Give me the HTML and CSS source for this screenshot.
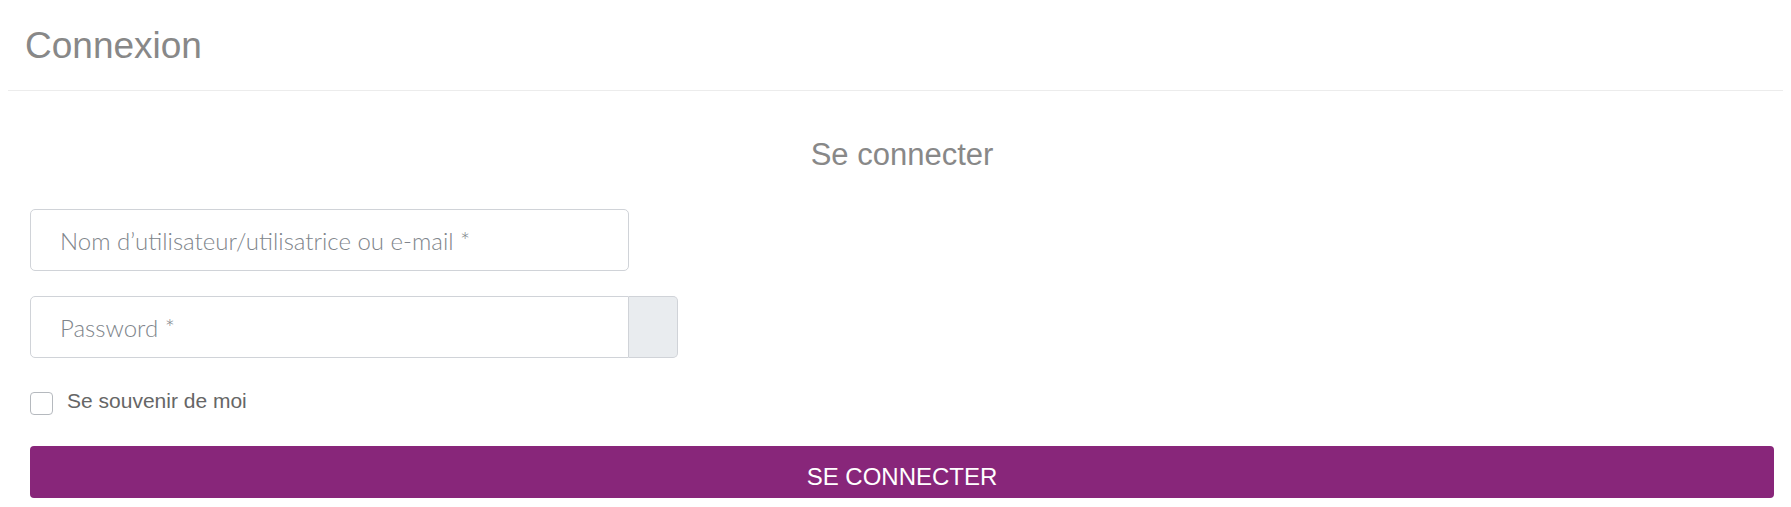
FILE: index.html
```html
<!DOCTYPE html>
<html lang="fr">
<head>
    <meta charset="UTF-8" />
    <meta name="viewport" content="width=device-width, initial-scale=1" />
    <title>Connexion</title>
    <link rel="stylesheet" href="styles.css">
</head>
<body>
    <div class="page-header">
        <h1>Connexion</h1>
    </div>

    <div class="login">
        <h2>Se connecter</h2>
        <form>
            <div class="field">
                <input type="text" placeholder="Nom d’utilisateur/utilisatrice ou e-mail *">
            </div>
            <div class="field group">
                <input type="password" placeholder="Password *">
                <span class="addon"></span>
            </div>
            <label class="remember">
                <span class="box"></span>
                <span class="remember-text">Se souvenir de moi</span>
            </label>
            <button type="button" class="submit">SE CONNECTER</button>
        </form>
    </div>
</body>
</html>
```

FILE: styles.css
```css
body {
    margin: 8px;
    font-family: "Liberation Sans", Arial, sans-serif;
    background: #fff;
    color: #666;
}
.page-header {
    padding: 16px 17px 0 17px;
    height: 66px;
    border-bottom: 1px solid #ececec;
}
.page-header h1 {
    margin: 0;
    font-size: 37px;
    line-height: 43px;
    font-weight: normal;
    color: #888;
}
.login {
    padding: 0 9px 0 22px;
}
.login h2 {
    margin: 45px 0 36px 0;
    text-align: center;
    font-size: 31px;
    line-height: 37px;
    font-weight: normal;
    color: #888;
}
.field {
    display: flex;
    margin-bottom: 25px;
}
.field input {
    box-sizing: border-box;
    width: 599px;
    height: 62px;
    padding: 0 29px;
    border: 1px solid #d0d3d8;
    border-radius: 5px;
    font-family: Lato, "Liberation Sans", sans-serif;
    font-weight: 300;
    font-size: 24px;
    color: #555;
    background: #fff;
    outline: none;
}
.field input::placeholder {
    color: #80858b;
}
.group input {
    border-radius: 5px 0 0 5px;
}
.addon {
    box-sizing: border-box;
    width: 49px;
    height: 62px;
    background: #e9ecef;
    border: 1px solid #d0d3d8;
    border-left: none;
    border-radius: 0 5px 5px 0;
}
.group {
    margin-bottom: 34px;
}
.remember {
    display: flex;
    align-items: flex-start;
    gap: 14px;
    margin-bottom: 31px;
}
.box {
    box-sizing: border-box;
    width: 23px;
    height: 23px;
    border: 1px solid #b5b9be;
    border-radius: 4px;
    background: #fff;
}
.remember-text {
    font-size: 21px;
    line-height: 18px;
    color: #666;
}
.submit {
    display: block;
    width: 100%;
    height: 52px;
    padding: 17px 0 7px 0;
    border: none;
    border-radius: 4px;
    background: #88267a;
    color: #fff;
    font-family: "Liberation Sans", Arial, sans-serif;
    font-size: 24px;
    line-height: 28px;
}
```
